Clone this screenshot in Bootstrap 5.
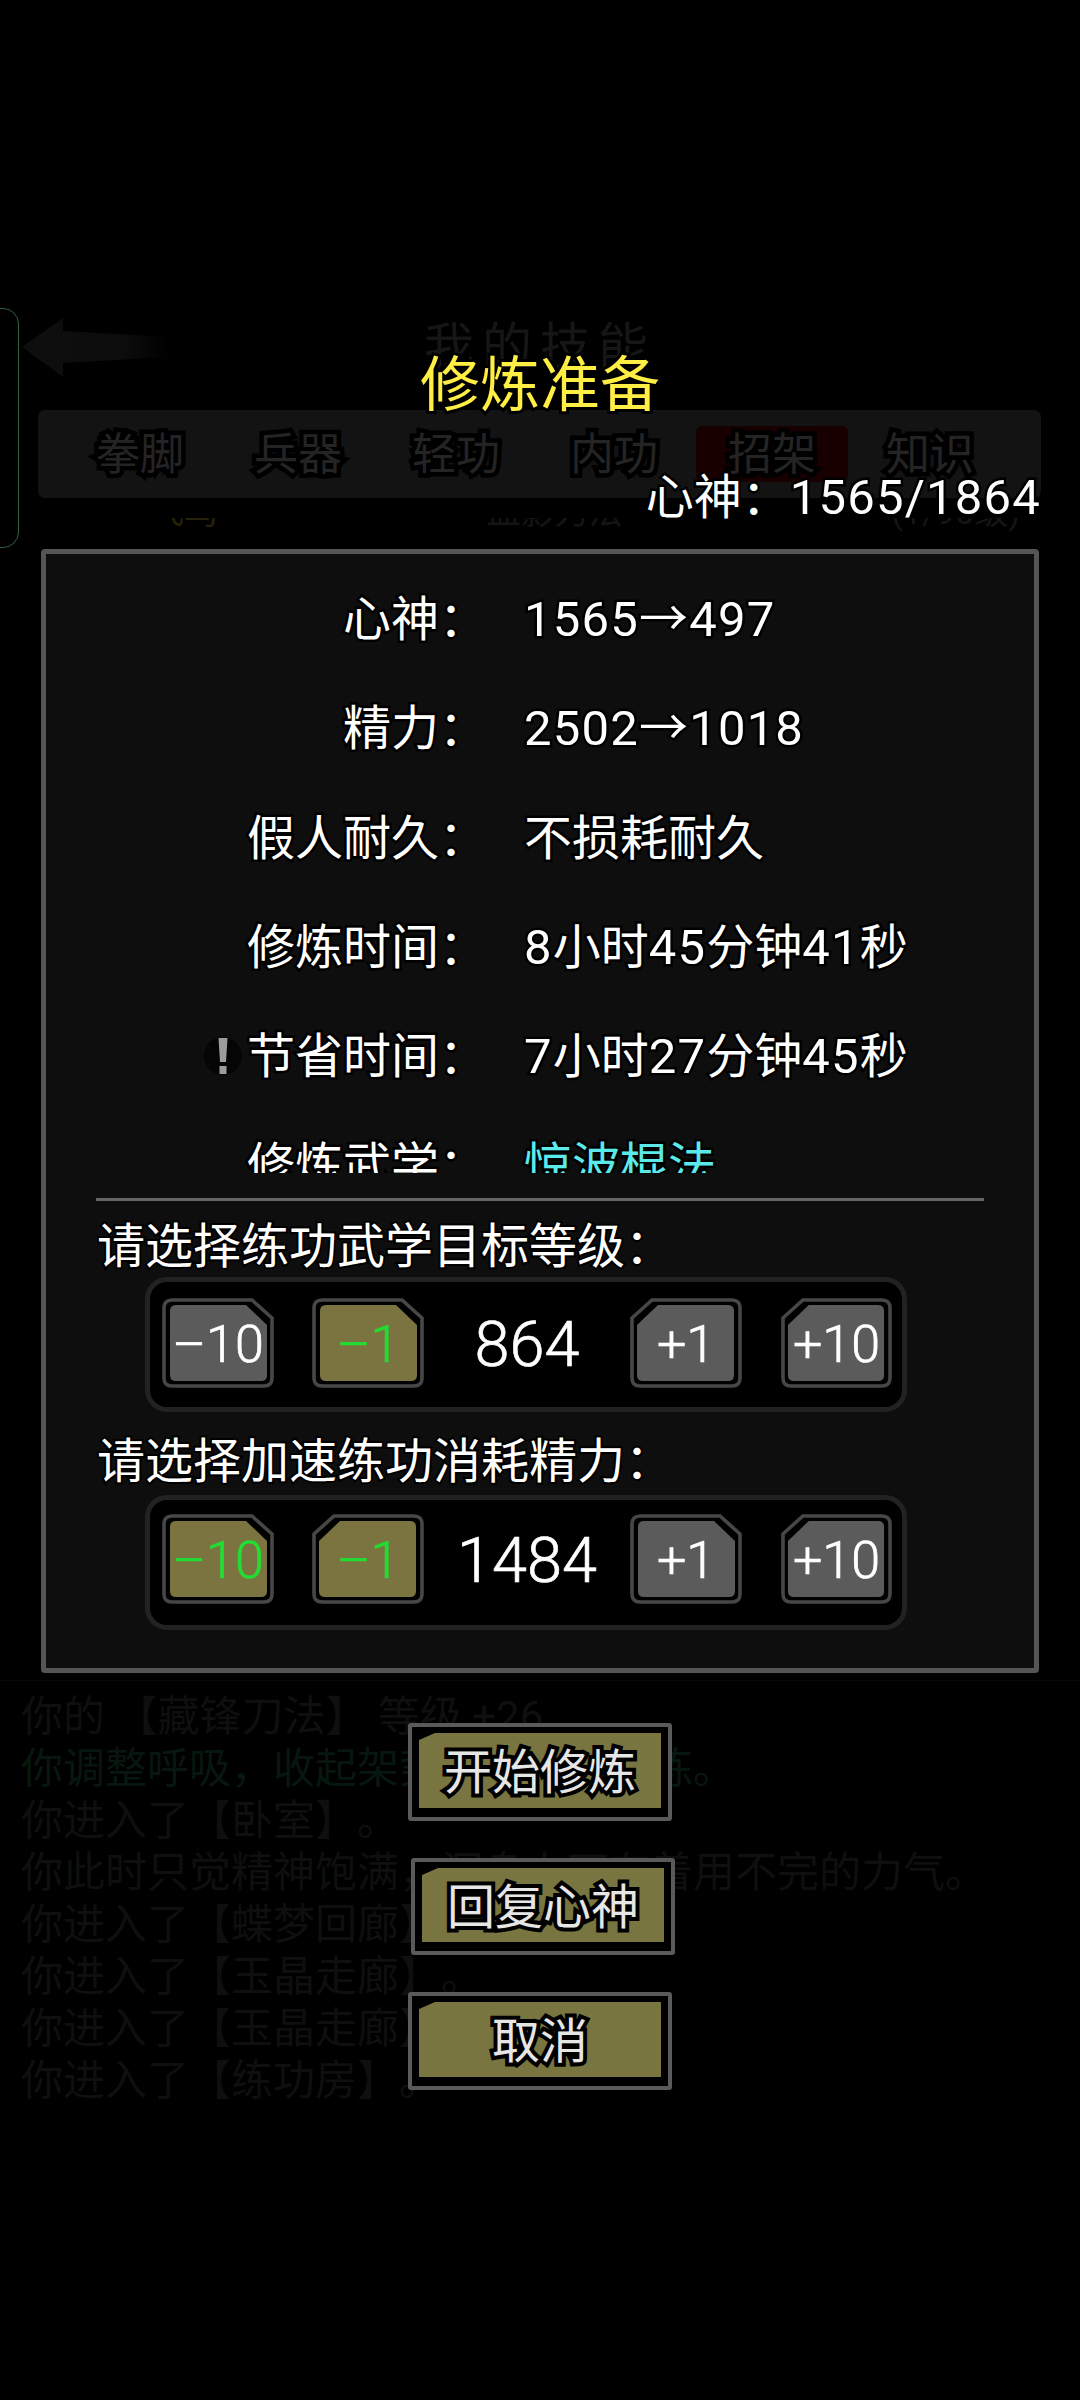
<!DOCTYPE html>
<html lang="zh">
<head>
<meta charset="utf-8">
<title>修炼准备</title>
<link href="https://cdn.jsdelivr.net/npm/bootstrap@5.3.0/dist/css/bootstrap.min.css" rel="stylesheet">
<style>
html,body{background:#000;margin:0}
body{font-family:Roboto,"Noto Sans CJK SC",sans-serif;color:#fff}
.stage{width:1080px;height:2400px;overflow:hidden}
/* dim game screen behind the dialog */
.side-tab{left:-10px;top:308px;width:29px;height:240px;border:1.5px solid #2f6040;border-radius:0 16px 16px 0}
.back-arrow{left:22px;top:318px;width:146px;height:60px}
.scr-title{padding-top:312px;height:410px;font-size:50px;line-height:60px;letter-spacing:8px;color:#161616;font-family:"Noto Sans CJK SC",sans-serif;text-align:center}
.tabbar{margin:0 39px 0 38px;height:88px;background:#131313;border-radius:7px;padding:16px 21px 0 23px}
.tabitem{width:158px;height:56px;font-size:44px;line-height:58px;text-align:center;color:#242424;-webkit-text-stroke:9px #000;paint-order:stroke fill;border-radius:6px}
.tabitem.on{background:#190000;margin:0 3px;width:152px}
.peek{height:37px;padding-top:20px;padding-right:60px;padding-left:150px;font-size:34px;color:#141414}
.peek>div{height:15px;overflow:hidden}
.peek span{display:block;line-height:38px;margin-top:-25px}
.peek .gold{color:#24220a}
.hidden-list{height:1145px}
.logbox{border-top:1px solid #080808;padding:9.5px 0 0 21px;font-size:42px;line-height:52px;color:#0e0f0e;white-space:nowrap;text-spacing-trim:space-all}
.logbox .teal{color:#07170f}
/* dialog */
.dialog-layer{inset:0}
.dlg-title{margin-top:356px;font-size:60px;line-height:60px;text-align:center;color:#ffee44;-webkit-text-stroke:6px #000;paint-order:stroke fill}
.dlg-mana{height:75px;margin-top:58px;padding-right:39px;font-size:48px;line-height:48px;text-align:right;-webkit-text-stroke:5px #000;paint-order:stroke fill;white-space:nowrap}
.nm{font-size:49px;letter-spacing:1.2px}
.dlg-panel{margin:0 41px;width:998px;height:1124px;background:#0e0e0f;border:5px solid #555;border-radius:4px}
.info-clip{height:619px;overflow:hidden;padding-top:11px}
.info-row{height:109.3px;font-size:48px;line-height:109.3px;white-space:nowrap;-webkit-text-stroke:5px #000;paint-order:stroke fill}
.info-lb{width:441px;text-align:right}
.info-vl{margin-left:37px}
.warn-ic{width:38px;height:42px;vertical-align:-5px;margin-right:5px}
.cyan{color:#5be9e9}
.sep{height:3px;background:#666;margin:25px 50px 0 50px}
.pick-h{margin:22px 0 0 51px;font-size:48px;line-height:48px;white-space:nowrap;-webkit-text-stroke:4px #000;paint-order:stroke fill}
.pick-h.second{margin-top:26px}
.stepbar{margin:6px 127px 0 99px;height:135px;background:#000;border:5px solid #222;border-radius:22px;padding:16px 10px 0 12px;display:grid;grid-template-columns:112px 112px minmax(0,1fr) 113px 111px;column-gap:38px}
.stepbar.second{margin-top:9px;padding-top:14px}
.stepbar .val{font-size:63px;line-height:93px;font-weight:300;-webkit-text-stroke:.7px #fff}
.stepb{width:100%;max-width:112px;height:90px;padding:0;border:0;border-radius:0;color:#fff;font-size:52px;line-height:93px;font-weight:300;-webkit-text-stroke:.7px currentColor;font-family:Roboto,sans-serif;--f:#5b5b5b;background:transparent}
.stepb svg{inset:0;width:100%;height:100%}
.stepb .tx{z-index:1}
.stepb.tl svg{transform:scaleX(-1)}
.stepb.act{--f:#7b7440;color:#22dd33}
.ln{fill:none;stroke:#474747;stroke-width:3.6}
.fl{fill:var(--f)}
.cmd-col{margin-top:50px;gap:37px}
.cmd-btn{width:264px;height:98px;padding:6px 7px 9px;border:4px solid #5a5a5a;border-radius:3px;background:#000}
.cmd-btn.shift{margin-left:6px;height:97px}
.cmd-in{height:100%;background:#787540;clip-path:polygon(16px 0,100% 0,100% 100%,0 100%,0 7px);font-size:48px;line-height:79px;color:#e6e6e6;-webkit-text-stroke:8px #000;paint-order:stroke fill;text-align:center}
</style>
</head>
<body>
<svg width="0" height="0" class="position-absolute">
  <symbol id="chamfer" viewBox="0 0 112 90" preserveAspectRatio="none">
    <path class="ln" d="M10 2H90L110 20V80Q110 88 102 88H10Q2 88 2 80V10Q2 2 10 2Z"/>
    <path class="fl" d="M14 7H84L105 27V77Q105 83 99 83H14Q8 83 8 77V13Q8 7 14 7Z"/>
  </symbol>
  <linearGradient id="arrowfade" x1="0" x2="1" y1="0" y2="0">
    <stop offset="0" stop-color="#0e0e0e"/><stop offset=".7" stop-color="#0c0c0c"/><stop offset="1" stop-color="#000"/>
  </linearGradient>
</svg>
<div class="stage position-relative">
  <div class="side-tab position-absolute"></div>
  <svg class="back-arrow position-absolute" viewBox="0 0 146 60"><polygon fill="url(#arrowfade)" points="0,29 41,0 41,13 146,19 146,39 41,45 41,59"/></svg>

  <div class="scr-title">我的技能</div>
  <div class="tabbar d-flex">
    <div class="tabitem">拳脚</div>
    <div class="tabitem">兵器</div>
    <div class="tabitem">轻功</div>
    <div class="tabitem">内功</div>
    <div class="tabitem on">招架</div>
    <div class="tabitem">知识</div>
  </div>
  <div class="peek d-flex justify-content-between">
    <div class="gold"><span>飞鸟</span></div><div><span>血影刀法</span></div><div><span>(1/90级)</span></div>
  </div>
  <div class="hidden-list"></div>
  <div class="logbox">
    <div>你的&nbsp;【藏锋刀法】&nbsp;等级 +26</div>
    <div class="teal">你调整呼吸，收起架势，结束了修炼。</div>
    <div>你进入了【卧室】。</div>
    <div>你此时只觉精神饱满，浑身上下有着用不完的力气。</div>
    <div>你进入了【蝶梦回廊】。</div>
    <div>你进入了【玉晶走廊】。</div>
    <div>你进入了【玉晶走廊】。</div>
    <div>你进入了【练功房】。</div>
  </div>

  <div class="dialog-layer position-absolute">
    <div class="dlg-title">修炼准备</div>
    <div class="dlg-mana">心神：<span class="nm">1565/1864</span></div>
    <div class="dlg-panel">
      <div class="info-clip">
        <div class="info-row d-flex"><div class="info-lb">心神：</div><div class="info-vl"><span class="nm">1565→497</span></div></div>
        <div class="info-row d-flex"><div class="info-lb">精力：</div><div class="info-vl"><span class="nm">2502→1018</span></div></div>
        <div class="info-row d-flex"><div class="info-lb">假人耐久：</div><div class="info-vl">不损耗耐久</div></div>
        <div class="info-row d-flex"><div class="info-lb">修炼时间：</div><div class="info-vl"><span class="nm">8</span>小时<span class="nm">45</span>分钟<span class="nm">41</span>秒</div></div>
        <div class="info-row d-flex"><div class="info-lb"><svg class="warn-ic" viewBox="0 0 38 42"><circle cx="19" cy="20" r="19" fill="#050505"/><polygon fill="#9c9c9c" points="14.5,2 23.5,2 22,26 16,26"/><rect x="15.5" y="30" width="7" height="8" fill="#9c9c9c"/></svg>节省时间：</div><div class="info-vl"><span class="nm">7</span>小时<span class="nm">27</span>分钟<span class="nm">45</span>秒</div></div>
        <div class="info-row d-flex"><div class="info-lb">修炼武学：</div><div class="info-vl cyan">惊波棍法</div></div>
      </div>
      <div class="sep"></div>
      <div class="pick-h">请选择练功武学目标等级：</div>
      <div class="stepbar">
        <button class="btn stepb tr position-relative"><svg class="position-absolute"><use href="#chamfer"/></svg><span class="tx position-relative">–10</span></button>
        <button class="btn stepb tr act position-relative"><svg class="position-absolute"><use href="#chamfer"/></svg><span class="tx position-relative">–1</span></button>
        <div class="val d-flex justify-content-center">864</div>
        <button class="btn stepb tl position-relative"><svg class="position-absolute"><use href="#chamfer"/></svg><span class="tx position-relative">+1</span></button>
        <button class="btn stepb tl position-relative"><svg class="position-absolute"><use href="#chamfer"/></svg><span class="tx position-relative">+10</span></button>
      </div>
      <div class="pick-h second">请选择加速练功消耗精力：</div>
      <div class="stepbar second">
        <button class="btn stepb tr act position-relative"><svg class="position-absolute"><use href="#chamfer"/></svg><span class="tx position-relative">–10</span></button>
        <button class="btn stepb tl act position-relative"><svg class="position-absolute"><use href="#chamfer"/></svg><span class="tx position-relative">–1</span></button>
        <div class="val d-flex justify-content-center">1484</div>
        <button class="btn stepb tr position-relative"><svg class="position-absolute"><use href="#chamfer"/></svg><span class="tx position-relative">+1</span></button>
        <button class="btn stepb tl position-relative"><svg class="position-absolute"><use href="#chamfer"/></svg><span class="tx position-relative">+10</span></button>
      </div>
    </div>
    <div class="cmd-col d-flex flex-column align-items-center">
      <button class="btn cmd-btn"><div class="cmd-in">开始修炼</div></button>
      <button class="btn cmd-btn shift"><div class="cmd-in">回复心神</div></button>
      <button class="btn cmd-btn"><div class="cmd-in">取消</div></button>
    </div>
  </div>
</div>
<script src="https://cdn.jsdelivr.net/npm/bootstrap@5.3.0/dist/js/bootstrap.bundle.min.js"></script>
</body>
</html>
